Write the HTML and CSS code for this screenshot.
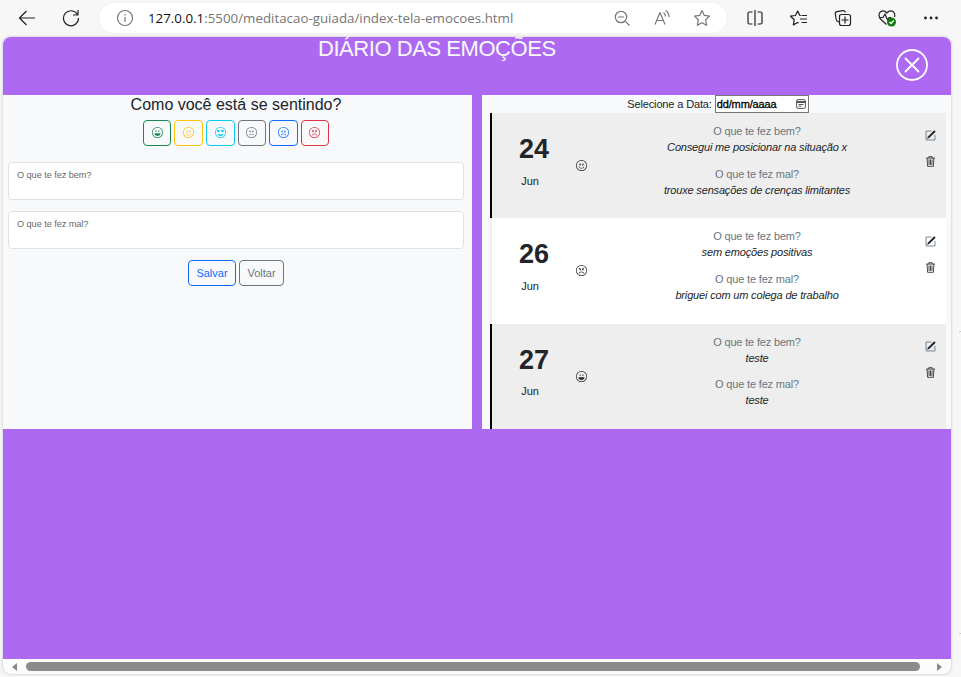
FILE: index.html
```html
<!DOCTYPE html>
<html lang="pt-BR">
<head>
<meta charset="utf-8">
<title>Diário das Emoções</title>
<link rel="stylesheet" href="styles.css">
</head>
<body>
<svg class="sprite" aria-hidden="true">
  <symbol id="ring" viewBox="0 0 16 16"><path fill="currentColor" d="M8 15A7 7 0 1 1 8 1a7 7 0 0 1 0 14m0 1A8 8 0 1 0 8 0a8 8 0 0 0 0 16"/></symbol>
  <symbol id="smile" viewBox="0 0 16 16"><use href="#ring"/><path fill="currentColor" d="M4.285 9.567a.5.5 0 0 1 .683.183A3.5 3.5 0 0 0 8 11.5a3.5 3.5 0 0 0 3.032-1.75.5.5 0 1 1 .866.5A4.5 4.5 0 0 1 8 12.5a4.5 4.5 0 0 1-3.898-2.25.5.5 0 0 1 .183-.683M7 6.5C7 7.328 6.552 8 6 8s-1-.672-1-1.500S5.448 5 6 5s1 .672 1 1.500m4 0c0 .828-.448 1.500-1 1.500s-1-.672-1-1.500S9.448 5 10 5s1 .672 1 1.500"/></symbol>
  <symbol id="laugh" viewBox="0 0 16 16"><use href="#ring"/><path fill="currentColor" d="M12.331 9.500a1 1 0 0 1 0 1A5 5 0 0 1 8 13a5 5 0 0 1-4.330-2.500A1 1 0 0 1 4.535 9h6.930a1 1 0 0 1 .866.500M7 6.500c0 .828-.448 0-1 0s-1 .828-1 0S5.448 5 6 5s1 .672 1 1.500m4 0c0 .828-.448 0-1 0s-1 .828-1 0S9.448 5 10 5s1 .672 1 1.500"/></symbol>
  <symbol id="hearts" viewBox="0 0 16 16"><use href="#ring"/><path fill="currentColor" d="M11.315 10.014a.5.5 0 0 1 .548.736A4.500 4.500 0 0 1 7.965 13a4.500 4.500 0 0 1-3.898-2.250.5.5 0 0 1 .548-.736c1.080.23 2.200.486 3.350.486s2.270-.256 3.350-.486M4.756 4.566c.763-1.424 4.020-.12.952 3.434-4.496-1.596-2.350-4.298-.952-3.434m6.488 0c1.398-.864 3.544 1.838-.952 3.434-3.067-3.554.19-4.858.952-3.434"/></symbol>
  <symbol id="neutral" viewBox="0 0 16 16"><use href="#ring"/><path fill="currentColor" d="M4 10.500a.5.5 0 0 0 .5.500h7a.5.5 0 0 0 0-1h-7a.5.5 0 0 0-.5.500M7 6.500C7 7.328 6.552 8 6 8s-1-.672-1-1.500S5.448 5 6 5s1 .672 1 1.500m4 0c0 .828-.448 1.500-1 1.500s-1-.672-1-1.500S9.448 5 10 5s1 .672 1 1.500"/></symbol>
  <symbol id="frown" viewBox="0 0 16 16"><use href="#ring"/><path fill="currentColor" d="M4.285 12.433a.5.5 0 0 0 .683-.183A3.500 3.500 0 0 1 8 10.500a3.500 3.500 0 0 1 3.032 1.750.5.5 0 0 0 .866-.5A4.500 4.500 0 0 0 8 9.500a4.500 4.500 0 0 0-3.898 2.250.5.5 0 0 0 .183.683M7 6.500C7 7.328 6.552 8 6 8s-1-.672-1-1.500S5.448 5 6 5s1 .672 1 1.500m4 0c0 .828-.448 1.500-1 1.500s-1-.672-1-1.500S9.448 5 10 5s1 .672 1 1.500"/></symbol>
  <symbol id="angry" viewBox="0 0 16 16"><use href="#ring"/><path fill="currentColor" d="M4.285 12.433a.5.5 0 0 0 .683-.183A3.500 3.500 0 0 1 8 10.500a3.500 3.500 0 0 1 3.032 1.750.5.5 0 0 0 .866-.5A4.500 4.500 0 0 0 8 9.500a4.500 4.500 0 0 0-3.898 2.250.5.5 0 0 0 .183.683m6.991-8.380a.5.5 0 1 1 .448.894l-1.009.504c.176.270.285.640.285 1.049 0 .828-.448 1.500-1 1.500s-1-.672-1-1.500c0-.247.040-.480.110-.686a.502.502 0 0 1 .166-.761zm-6.552 0a.5.5 0 0 0-.448.894l1.009.504A1.940 1.940 0 0 0 5 6.500C5 7.328 5.448 8 6 8s1-.672 1-1.500c0-.247-.040-.480-.110-.686a.502.502 0 0 0-.166-.761z"/></symbol>
  <symbol id="pencil" viewBox="0 0 16 16"><path fill="none" stroke="#667a8c" stroke-width="1.300" d="M9.500 1.500H1.500v13h13V7"/><path fill="currentColor" d="m13.500.5 2 2-9.500 9.300-3 1 1-3z"/></symbol>
  <symbol id="trash" viewBox="0 0 16 16"><path fill="none" stroke="currentColor" stroke-width="1.200" d="M1.500 3h13M5.500 2.800V1h5v1.800M3 3l.8 12h8.400L13 3M5.700 5l.3 8M8 5v8M10.300 5 10 13"/></symbol>
</svg>

<header class="toolbar">
  <svg class="nav back" viewBox="0 0 18 18"><path d="M17 9H1.500M8.500 2l-7 7 7 7"/></svg>
  <svg class="nav reload" viewBox="0 0 18 18"><path d="M15.500 5.500A7.500 7.500 0 1 0 16.500 9M16 1v5h-5"/></svg>
  <div class="address">
    <svg class="info" viewBox="0 0 18 18"><circle cx="9" cy="9" r="7.500"/><path d="M9 8v5M9 5v1.500"/></svg>
    <span class="url"><b>127.0.0.1</b>:5500/meditacao-guiada/index-tela-emocoes.html</span>
    <svg class="tool" viewBox="0 0 18 18"><circle cx="8" cy="8" r="5.700"/><path d="M5 8h6M12.200 12.200 16.500 16.500"/></svg>
    <svg class="tool read" viewBox="0 0 18 18"><path d="M2 15.500 7 3.500l5 12M3.800 11.500h6.400M10.500 3.500q2 1.500 2 4M12.500 1.500q3.500 2 3.500 6.500"/></svg>
    <svg class="tool" viewBox="0 0 18 18"><path d="m9 1.500 2.300 4.900 5.200.7-3.800 3.700.9 5.500L9 13.700l-4.600 2.600.9-5.500L1.500 7.100l5.200-.7z"/></svg>
  </div>
  <div class="extras">
    <svg viewBox="0 0 18 18"><path d="M6.500 3H3.500Q2 3 2 4.500v9Q2 15 3.500 15h3M11.500 3h3Q16 3 16 4.500v9q0 1.500-1.500 1.500h-3M9 1v16"/></svg>
    <svg viewBox="0 0 18 18"><path d="M10.800 6.500H9.900L7.700 2 5.500 6.500l-5 .7 3.700 3.600-.9 5.100 4.400-2.400 1 .5M11.500 6.500H17M10 10h7M11.500 13.500H17"/></svg>
    <svg viewBox="0 0 18 18"><path d="M5 13Q2.500 12.500 2.200 10.500L1.300 5Q1 3 3 2.700l6-1q2-.3 2.500 2M7.500 5.500h7q2 0 2 2v7q0 2-2 2h-7q-2 0-2-2v-7q0-2 2-2M11 7.500v7M7.500 11h7"/></svg>
    <svg class="health" viewBox="0 0 18 18"><path d="M8.500 15.500 2 9.500Q-.2 5 2.500 2.700 6 .7 8.800 4 12 .7 15.300 2.700 17.500 5 16.500 8M1 8.500h4l2-3.500 2.500 6L11 8.500h2"/><circle cx="13.500" cy="13" r="4.500"/><path class="check" d="m11.500 13 1.500 1.500 2.700-3"/></svg>
    <svg class="dots" viewBox="0 0 18 18"><circle cx="3.500" cy="9" r="1.400"/><circle cx="9" cy="9" r="1.400"/><circle cx="14.500" cy="9" r="1.400"/></svg>
  </div>
</header>

<div class="window">
  <main class="page">
    <div class="banner">
      <h1>DIÁRIO DAS EMOÇÕES</h1>
      <svg class="close" viewBox="0 0 34 34"><circle cx="17" cy="17" r="15"/><path d="m10.500 10.500 13 13M23.500 10.500l-13 13"/></svg>
    </div>
    <div class="columns">
      <section class="panel form">
        <h2>Como você está se sentindo?</h2>
        <div class="moods">
          <button class="mood green"><svg><use href="#laugh"/></svg></button>
          <button class="mood yellow"><svg><use href="#smile"/></svg></button>
          <button class="mood cyan"><svg><use href="#hearts"/></svg></button>
          <button class="mood gray"><svg><use href="#neutral"/></svg></button>
          <button class="mood blue"><svg><use href="#frown"/></svg></button>
          <button class="mood red"><svg><use href="#angry"/></svg></button>
        </div>
        <div class="field">O que te fez bem?</div>
        <div class="field">O que te fez mal?</div>
        <div class="buttons"><button class="btn save">Salvar</button><button class="btn back-btn">Voltar</button></div>
      </section>
      <section class="panel diary">
        <div class="filter"><span>Selecione a Data:</span>
          <div class="date"><span>dd/mm/aaaa</span><svg viewBox="0 0 10 10"><rect x=".6" y=".6" width="8.800" height="8.800" rx="1.500"/><path d="M.6 2.500h8.800M.6 3.500h8.800M2.500 5.500h5M2.500 7.200h3"/></svg></div>
        </div>
        <article class="entry shaded">
          <div class="day"><strong>24</strong><span>Jun</span></div>
          <svg class="face"><use href="#smile"/></svg>
          <dl><dt>O que te fez bem?</dt><dd>Consegui me posicionar na situação x</dd><dt>O que te fez mal?</dt><dd>trouxe sensações de crenças limitantes</dd></dl>
          <div class="actions"><svg><use href="#pencil"/></svg><svg><use href="#trash"/></svg></div>
        </article>
        <article class="entry plain">
          <div class="day"><strong>26</strong><span>Jun</span></div>
          <svg class="face"><use href="#angry"/></svg>
          <dl><dt>O que te fez bem?</dt><dd>sem emoções positivas</dd><dt>O que te fez mal?</dt><dd>briguei com um colega de trabalho</dd></dl>
          <div class="actions"><svg><use href="#pencil"/></svg><svg><use href="#trash"/></svg></div>
        </article>
        <article class="entry shaded last">
          <div class="day"><strong>27</strong><span>Jun</span></div>
          <svg class="face"><use href="#laugh"/></svg>
          <dl><dt>O que te fez bem?</dt><dd>teste</dd><dt>O que te fez mal?</dt><dd>teste</dd></dl>
          <div class="actions"><svg><use href="#pencil"/></svg><svg><use href="#trash"/></svg></div>
        </article>
      </section>
    </div>
  </main>
  <div class="scrollbar"><i class="arrow left"></i><i class="thumb"></i><i class="arrow right"></i></div>
</div>
</body>
</html>
```
FILE: styles.css
```css
* { box-sizing: border-box; }
body { margin: 0; width: 961px; height: 677px; overflow: hidden; background: linear-gradient(#ccc, #ccc) 959px 331px / 2px 1px no-repeat, linear-gradient(#ccc, #ccc) 959px 633px / 2px 1px no-repeat, #f7f7f7; color: #212529; font-family: "Liberation Sans", Arial, sans-serif; font-size: 11px; }
h1, h2, dl, dd { margin: 0; font-weight: normal; }
button { font: inherit; padding: 0; }
svg { display: block; flex: none; }
.sprite { position: absolute; width: 0; height: 0; }

.toolbar { height: 37px; display: flex; align-items: center; padding: 0 0 1px 18px; }
.toolbar svg { width: 18px; height: 18px; fill: none; stroke: #222; stroke-width: 1.2; stroke-linejoin: round; }
.toolbar .reload { margin-left: 26px; }
.address { width: 628px; height: 30px; margin-left: 19px; padding-left: 17px; border-radius: 15px; background: #fff; display: flex; align-items: center; box-shadow: 0 0 2px #e6e6e6; }
.toolbar .address svg { stroke: #767676; }
.url { width: 464px; margin: 0 1px 0 14px; font-family: "Open Sans", "Noto Sans", sans-serif; font-size: 13.33px; line-height: 18px; color: #767676; white-space: nowrap; }
.url b { font-weight: normal; color: #111; }
.address .tool + .tool { margin-left: 22px; }
.extras { display: flex; margin-left: 19px; gap: 26px; }
.toolbar .health circle { fill: #107c10; stroke: none; }
.toolbar .health .check { stroke: #fff; }
.toolbar .dots { fill: #222; stroke: none; }

.window { width: 948px; height: 637px; margin-left: 3px; border-radius: 8px; overflow: hidden; background: #fcfcfc; box-shadow: 0 0 3px #bbb; }
.page { height: 622px; background: #ae69f2; }
.banner { height: 58px; display: flex; justify-content: flex-end; padding: 11px 22px 0 0; }
.banner h1 { flex: 1; margin-top: -11px; padding-left: 315px; font-size: 22px; line-height: 24px; letter-spacing: -0.45px; color: #f8f9fa; white-space: nowrap; }
.close { width: 34px; height: 34px; fill: none; stroke: #fff; stroke-width: 1.8; stroke-linecap: round; }
.columns { display: grid; grid-template-columns: 469px 469px; gap: 10px; height: 334px; }
.panel { background: #f8f9fa; }

.form h2 { padding-right: 3px; text-align: center; font-size: 16px; line-height: 19px; }
.moods { display: flex; justify-content: center; gap: 3px; margin: 6px 0 16px; padding-right: 3px; }
.mood { width: 28.6px; height: 26px; display: grid; place-items: center; border: 1px solid; border-radius: 4px; background: none; }
.mood svg { width: 11px; height: 11px; margin-bottom: 2px; }
.green { color: #198754; }
.yellow { color: #ffc107; }
.cyan { color: #0dcaf0; }
.gray { color: #6c757d; }
.blue { color: #0d6efd; }
.red { color: #dc3545; }
.field { height: 38px; margin: 0 8px 11px 5px; padding: 6px 8px; border: 1px solid #dee2e6; border-radius: 4px; background: #fff; color: #656a6e; font-size: 9.2px; line-height: 12px; letter-spacing: -0.07px; }
.buttons { display: flex; justify-content: center; gap: 3px; padding-right: 3px; }
.btn { height: 26px; border: 1px solid; border-radius: 4px; background: none; font-size: 11px; }
.save { width: 48px; color: #0d6efd; }
.back-btn { width: 45px; color: #6c757d; }

.diary { padding: 0 5px 0 8px; }
.filter { height: 18px; display: flex; align-items: center; justify-content: center; gap: 3px; letter-spacing: -0.14px; }
.date { width: 94px; height: 18px; display: flex; align-items: center; justify-content: space-between; padding: 0 2px 0 1px; border: 1px solid #767676; background: #fff; color: #000; -webkit-text-stroke: 0.3px #000; }
.date svg { width: 10px; height: 10px; fill: none; stroke: #555; stroke-width: 1; }
.entry { height: 105px; display: grid; grid-template-columns: 76px 27px 324px 23px; border-left: 2px solid; }
.shaded { background: #eee; border-color: #000; }
.plain { height: 106px; background: #fff; border-color: #eee; }
.day { display: flex; flex-direction: column; align-items: center; padding: 21px 0 0; }
.day strong { padding-left: 8px; font-size: 27px; line-height: 30px; }
.day span { margin-top: 10px; line-height: 14px; letter-spacing: -0.1px; }
.last .day span { margin-top: 9px; }
.face { width: 11px; height: 11px; margin: 47px 0 0 8px; }
dl { padding-top: 10px; text-align: center; line-height: 16px; letter-spacing: -0.17px; }
dt { color: #6c757d; }
dd { font-style: italic; }
dd + dt { margin-top: 11px; }
.last dd + dt { margin-top: 10px; }
.actions { display: flex; flex-direction: column; align-items: center; gap: 15px; padding-top: 17px; }
.actions svg { width: 11px; height: 11px; }
.plain .actions { padding-top: 18px; }

.scrollbar { height: 15px; display: flex; align-items: center; padding: 0 9px 0 8px; }
.arrow { border: 5px solid transparent; border-width: 4px 5px; }
.left { border-left: 0; border-right-color: #888; margin-left: 1px; }
.right { border-right: 0; border-left-color: #888; }
.thumb { flex: 1; height: 9px; margin: 0 17px 0 9px; border-radius: 5px; background: #8b8b8b; }
```
